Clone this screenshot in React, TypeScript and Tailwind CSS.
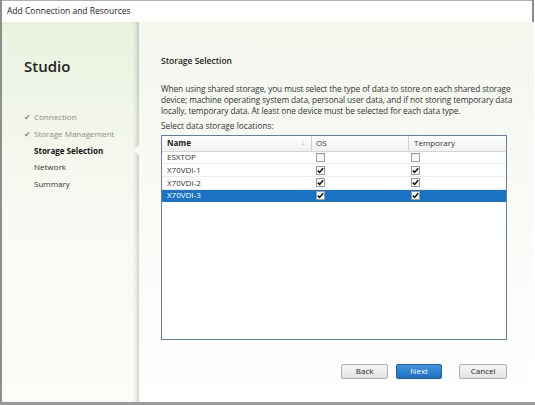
import React from 'react';

const font = { fontFamily: '"Open Sans", "Noto Sans", sans-serif' };

const rows = [
    { name: 'ESXTOP', os: false, temp: false, selected: false },
    { name: 'X70VDI-1', os: true, temp: true, selected: false },
    { name: 'X70VDI-2', os: true, temp: true, selected: false },
    { name: 'X70VDI-3', os: true, temp: true, selected: true },
];

function Check({ checked }: { checked: boolean }) {
    return (
        <div className="w-[9px] h-[9px] border border-[#9a9a9a] bg-gradient-to-b from-[#f4f4f4] to-white flex items-center justify-center">
            {checked && (
                <svg width="7" height="7" viewBox="0 0 7 7">
                    <path d="M0.8 3.6 L2.6 5.4 L6.2 1.2" fill="none" stroke="#111" strokeWidth="1.5" />
                </svg>
            )}
        </div>
    );
}

function NavItem({ label, done, active }: { label: string; done?: boolean; active?: boolean }) {
    return (
        <div className="flex items-center h-[16.7px]">
            <span className="w-[10px] text-[8px] text-[#8a8a8a]">{done ? '✔' : ''}</span>
            <span className={active ? 'font-bold text-[#111]' : done ? 'text-[#8a8a8a]' : 'text-[#333]'}>{label}</span>
        </div>
    );
}

export default function App() {
    return (
        <div className="w-[535px] h-[405px] bg-white overflow-hidden text-[8px] text-[#222]" style={font}>
            <div className="h-[402px] flex flex-col border-l-2 border-r-2 border-[#8e8e8e] mr-[1px]">
                {/* title bar */}
                <div className="h-[22px] shrink-0 flex items-center pl-[5px] text-[8.5px] text-[#222] bg-white border-t border-[#b0b0b0]">
                    Add Connection and Resources
                </div>

                <div className="flex-1 flex bg-gradient-to-b from-[#eaf2df] via-[#f8faf3] to-[#fcfcf9]">
                    {/* left nav */}
                    <div className="relative w-[137px] shrink-0 pl-[22px] pt-[37px] shadow-[inset_-5px_0_5px_-3px_rgba(0,0,0,0.2)]">
                        <div className="text-[15px] font-semibold text-[#222] leading-none">Studio</div>
                        <div className="mt-[35px] text-[8px]">
                            <NavItem label="Connection" done />
                            <NavItem label="Storage Management" done />
                            <NavItem label="Storage Selection" active />
                            <NavItem label="Network" />
                            <NavItem label="Summary" />
                        </div>
                        <div className="absolute right-0 top-[123px] w-0 h-0 border-y-[5px] border-y-transparent border-r-[5px] border-r-[#fbfcf8]" />
                    </div>

                    {/* content */}
                    <div className="flex-1 flex flex-col pl-[22px] pr-[22px] pt-[35px] bg-gradient-to-b from-[#f3f7ee] to-white">
                        <div className="font-semibold text-[8.5px] text-[#222] leading-none">Storage Selection</div>
                        <p className="mt-[17px] leading-[11px] text-[8.3px] text-[#333] tracking-[-0.1px] whitespace-nowrap">
                            When using shared storage, you must select the type of data to store on each shared storage
                            <br />
                            device; machine operating system data, personal user data, and if not storing temporary data
                            <br />
                            locally, temporary data. At least one device must be selected for each data type.
                        </p>
                        <div className="mt-[4px] leading-[11px] text-[8.3px] text-[#333]">Select data storage locations:</div>

                        {/* table */}
                        <div className="mt-[4px] w-[346px] h-[205px] border border-[#62809e] bg-white">
                            <div className="flex h-[16px] border-b border-[#d6d6d6] bg-gradient-to-b from-white to-[#f1f1f1]">
                                <div className="w-[150px] flex items-center justify-between pl-[5px] pr-[6px] border-r border-[#d0d0d0] font-bold text-[#222]">
                                    <span>Name</span>
                                    <span className="text-[7px] text-[#999]">↓</span>
                                </div>
                                <div className="w-[97px] flex items-center pl-[4px] border-r border-[#d0d0d0] text-[#333]">OS</div>
                                <div className="flex-1 flex items-center pl-[5px] text-[#333]">Temporary</div>
                            </div>
                            {rows.map((r) => (
                                <div
                                    key={r.name}
                                    className={
                                        'flex h-[12.7px] items-center border-b ' +
                                        (r.selected ? 'bg-[#1b74c3] border-[#1b74c3] text-white' : 'border-[#ececec] text-[#333]')
                                    }
                                >
                                    <div className="w-[150px] pl-[5px]">{r.name}</div>
                                    <div className="w-[97px] pl-[4px]">
                                        <Check checked={r.os} />
                                    </div>
                                    <div className="flex-1 pl-[2px]">
                                        <Check checked={r.temp} />
                                    </div>
                                </div>
                            ))}
                        </div>

                        {/* buttons */}
                        <div className="mt-[24px] flex justify-end gap-[8px] pr-[5px] text-[8px]">
                            <button className="w-[47px] h-[15px] border border-[#adadad] rounded-[2px] bg-gradient-to-b from-[#f7f7f7] to-[#e3e3e3] text-[#222]">
                                Back
                            </button>
                            <button className="w-[46px] h-[15px] mr-[9px] border border-[#1d5f9f] rounded-[2px] bg-gradient-to-b from-[#4295dc] to-[#1e6fbf] text-white">
                                Next
                            </button>
                            <button className="w-[48px] h-[15px] border border-[#adadad] rounded-[2px] bg-gradient-to-b from-[#f7f7f7] to-[#e3e3e3] text-[#222]">
                                Cancel
                            </button>
                        </div>
                    </div>
                </div>
            </div>
            <div className="h-[3px] bg-[#9a9a9a]" />
        </div>
    );
}
